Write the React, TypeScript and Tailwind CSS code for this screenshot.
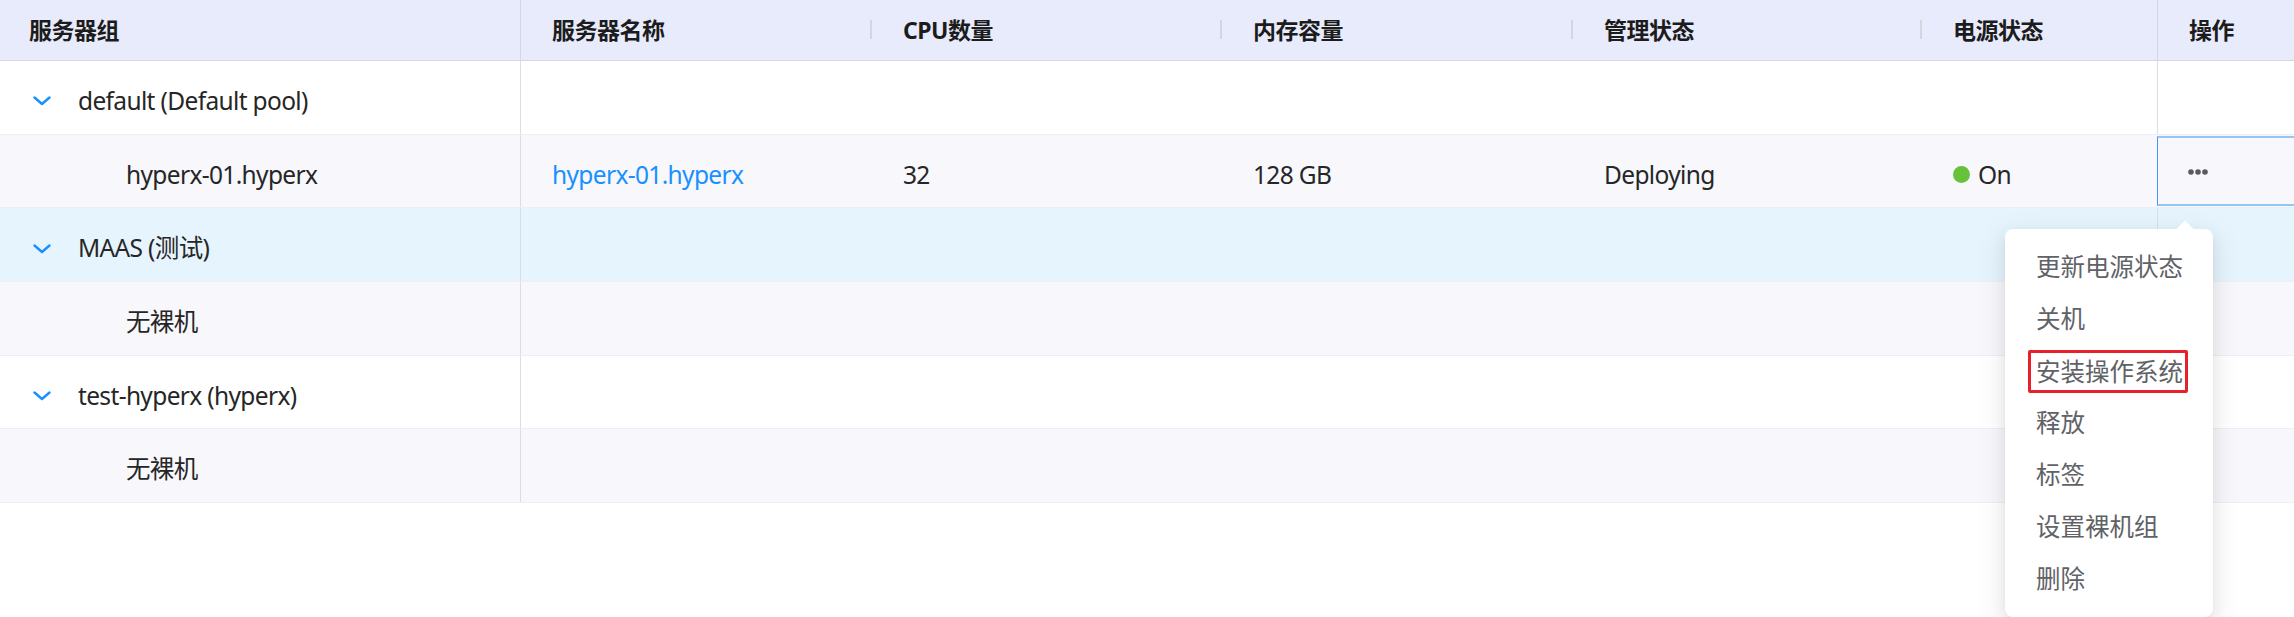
import React from "react";

type Row =
  | { kind: "group"; label: string; bg: string }
  | { kind: "node"; bg: string; name: string; cpu: string; mem: string; status: string; power: string; active?: boolean }
  | { kind: "empty"; bg: string };

const rows: Row[] = [
  { kind: "group", label: "default (Default pool)", bg: "bg-white" },
  {
    kind: "node",
    bg: "bg-[#f8f8fc]",
    name: "hyperx-01.hyperx",
    cpu: "32",
    mem: "128 GB",
    status: "Deploying",
    power: "On",
    active: true,
  },
  { kind: "group", label: "MAAS (测试)", bg: "bg-[#e6f4fe]" },
  { kind: "empty", bg: "bg-[#f8f8fc]" },
  { kind: "group", label: "test-hyperx (hyperx)", bg: "bg-white" },
  { kind: "empty", bg: "bg-[#f8f8fc]" },
];

const menuItems = ["更新电源状态", "关机", "安装操作系统", "释放", "标签", "设置裸机组", "删除"];

function Chevron() {
  return (
    <svg width="18" height="10" viewBox="0 0 18 10" className="shrink-0">
      <polyline points="1.5,1.5 9,8 16.5,1.5" fill="none" stroke="#1890ff" strokeWidth="2.4" strokeLinecap="round" strokeLinejoin="round" />
    </svg>
  );
}

function HeaderCell({ width, children }: { width: string; children: React.ReactNode }) {
  return (
    <div className={`${width} relative flex items-center pl-[31px]`}>
      {children}
      <span className="absolute right-0 top-[20px] h-[19px] w-[2px] bg-[#d4d6de]" />
    </div>
  );
}

function Dots() {
  return (
    <svg width="20" height="6" viewBox="0 0 20 6">
      <circle cx="3" cy="3" r="2.8" fill="#5b5b5f" />
      <circle cx="10" cy="3" r="2.8" fill="#5b5b5f" />
      <circle cx="17" cy="3" r="2.8" fill="#5b5b5f" />
    </svg>
  );
}

export default function App() {
  return (
    <div
      className="relative h-[617px] w-full overflow-hidden bg-white text-[24.5px] tracking-[-0.65px] text-[#262626]"
      style={{ fontFamily: '"Noto Sans", "Noto Sans CJK SC", sans-serif' }}
    >
      <div className="flex h-[61px] border-b border-[#d5d7df] bg-[#e8ebfb] text-[23px] font-bold tracking-[-0.5px] text-[#1c1c1c]">
        <div className="flex w-[521px] items-center border-r border-[#d5d7df] pl-[29px]">服务器组</div>
        <HeaderCell width="w-[351px]">服务器名称</HeaderCell>
        <HeaderCell width="w-[350px]">CPU数量</HeaderCell>
        <HeaderCell width="w-[351px]">内存容量</HeaderCell>
        <HeaderCell width="w-[349px]">管理状态</HeaderCell>
        <div className="flex w-[235px] items-center pl-[31px]">电源状态</div>
        <div className="flex flex-1 items-center border-l border-[#d5d7df] pl-[31px]">操作</div>
      </div>

      {rows.map((row, i) => (
        <div key={i} className={`flex h-[73.7px] border-b border-[#eeeff4] ${row.bg}`}>
          <div className="flex w-[521px] items-center border-r border-[#dcdde3] pt-[8px]">
            {row.kind === "group" ? (
              <div className="flex items-center pl-[33px]">
                <Chevron />
                <span className="ml-[27px]">{row.label}</span>
              </div>
            ) : (
              <span className="pl-[126px]">{row.kind === "node" ? row.name : "无裸机"}</span>
            )}
          </div>
          <div className="flex w-[351px] items-center pl-[31px] pt-[8px] text-[#1890ff]">{row.kind === "node" ? row.name : ""}</div>
          <div className="flex w-[350px] items-center pl-[31px] pt-[8px]">{row.kind === "node" ? row.cpu : ""}</div>
          <div className="flex w-[351px] items-center pl-[31px] pt-[8px]">{row.kind === "node" ? row.mem : ""}</div>
          <div className="flex w-[349px] items-center pl-[31px] pt-[8px]">{row.kind === "node" ? row.status : ""}</div>
          <div className="flex w-[235px] items-center pl-[31px] pt-[8px]">
            {row.kind === "node" ? (
              <>
                <span className="mb-[2px] h-[17px] w-[17px] rounded-full bg-[#67c23a]" />
                <span className="ml-[8px]">{row.power}</span>
              </>
            ) : null}
          </div>
          {row.kind === "node" && row.active ? (
            <div className="my-[1px] flex flex-1 items-center border-y-2 border-l border-y-[#91c8f6] border-l-[#4096ff] pl-[30px] pt-[2px]">
              <Dots />
            </div>
          ) : (
            <div className="flex-1 border-l border-[#dcdde3]" />
          )}
        </div>
      ))}

      <div className="absolute left-[2005px] top-[229px] w-[208px] rounded-[8px] bg-white py-[12px] text-[24.5px] tracking-normal text-[#606266] shadow-[0_6px_16px_rgba(0,0,0,0.08),0_3px_6px_-4px_rgba(0,0,0,0.12),0_9px_28px_8px_rgba(0,0,0,0.05)]">
        <span className="absolute left-[174px] top-[-6px] h-[12px] w-[12px] rotate-45 bg-white" />
        {menuItems.map((item) => (
          <div key={item} className="flex h-[52px] items-center pl-[31px]">
            {item === "安装操作系统" ? (
              <span className="-ml-[8px] rounded-[2px] border-[3px] border-[#e8202a] pl-[5px] pr-[2px] leading-[37px]">{item}</span>
            ) : (
              item
            )}
          </div>
        ))}
      </div>
    </div>
  );
}
